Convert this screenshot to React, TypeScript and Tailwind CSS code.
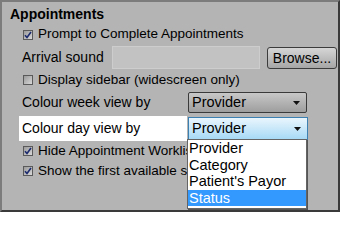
import React from 'react';

const font = { fontFamily: '"Liberation Sans", Arial, sans-serif' };

const Check = ({ checked }: { checked: boolean }) => (
  <span className="mx-[1px] flex h-[10px] w-[10px] shrink-0 items-center justify-center border border-[#5a5a5a] bg-gradient-to-br from-[#9a9a9a] to-[#d8d8d8]">
    {checked && (
      <svg width="8" height="8" viewBox="0 0 8 8">
        <path d="M1 4.2 L3 6.5 L7 1" fill="none" stroke="#1c2a6e" strokeWidth="1.6" />
      </svg>
    )}
  </span>
);

const Arrow = () => (
  <svg width="7" height="4" viewBox="0 0 7 4" className="ml-auto mr-[6px]">
    <path d="M0 0 H7 L3.5 4 Z" fill="#111" />
  </svg>
);

const options = ['Provider', 'Category', "Patient's Payor", 'Status'];

export default function App() {
  return (
    <div
      className="relative flex h-[212px] w-[340px] flex-col border-2 border-[#7c7c7c] border-r-[#3a3a3a] border-b-[#3a3a3a] bg-[#b4b4b4] pl-[8px] pt-[2px] text-black"
      style={font}
    >
      <div className="flex h-[20px] items-center text-[14px] font-bold">Appointments</div>

      <div className="flex h-[21px] items-center gap-[4px] pl-[12px] text-[13.5px]">
        <Check checked />
        <span>Prompt to Complete Appointments</span>
      </div>

      <div className="flex h-[25px] items-center pl-[12px] text-[14px]">
        <span className="w-[90px]">Arrival sound</span>
        <div className="h-[23px] w-[148px] border border-[#cdcdcd] bg-[#c2c2c2]" />
        <button className="ml-[7px] h-[22px] w-[70px] rounded-[3px] border border-[#3c3c3c] bg-gradient-to-b from-[#d6d6d6] to-[#a6a6a6] text-[14px]">
          Browse...
        </button>
      </div>

      <div className="flex h-[20px] items-center gap-[4px] pl-[12px] text-[13.5px]">
        <Check checked={false} />
        <span>Display sidebar (widescreen only)</span>
      </div>

      <div className="flex h-[25px] items-center pl-[12px] text-[14px]">
        <span className="w-[166px]">Colour week view by</span>
        <div className="flex h-[21px] w-[119px] items-center rounded-[2px] border border-[#3a3a3a] bg-gradient-to-b from-[#c8c8c8] to-[#9e9e9e] pl-[3px] text-[14.5px]">
          Provider
          <Arrow />
        </div>
      </div>

      <div className="mt-[1px] ml-[9px] flex h-[25px] w-[168px] items-center bg-white pl-[3px] text-[14px]">
        <span className="w-[166px] shrink-0">Colour day view by</span>
        <div className="flex h-[23px] w-[120px] shrink-0 items-center border border-[#3c7fb1] bg-gradient-to-b from-[#eaf6fd] to-[#a7d9f5] pl-[3px] text-[14.5px]">
          Provider
          <Arrow />
        </div>
      </div>

      <div className="flex h-[20px] items-center gap-[4px] pl-[12px] text-[13.5px]">
        <Check checked />
        <span className="w-[150px] overflow-hidden whitespace-nowrap">Hide Appointment Worklist</span>
      </div>
      <div className="flex h-[20px] items-center gap-[4px] pl-[12px] text-[13.5px]">
        <Check checked />
        <span className="w-[150px] overflow-hidden whitespace-nowrap">Show the first available slot</span>
      </div>

      <div className="absolute left-[185px] top-[137px] w-[120px] border border-[#646464] bg-white pb-[2px] text-[14.5px] leading-[16.5px] shadow-[1px_1px_0_#555]">
        {options.map((o) => (
          <div
            key={o}
            className={
              o === 'Status'
                ? 'flex h-[16.5px] items-center bg-[#3399ff] pl-[1px] text-white'
                : 'flex h-[16.5px] items-center pl-[1px]'
            }
          >
            {o}
          </div>
        ))}
      </div>
    </div>
  );
}
